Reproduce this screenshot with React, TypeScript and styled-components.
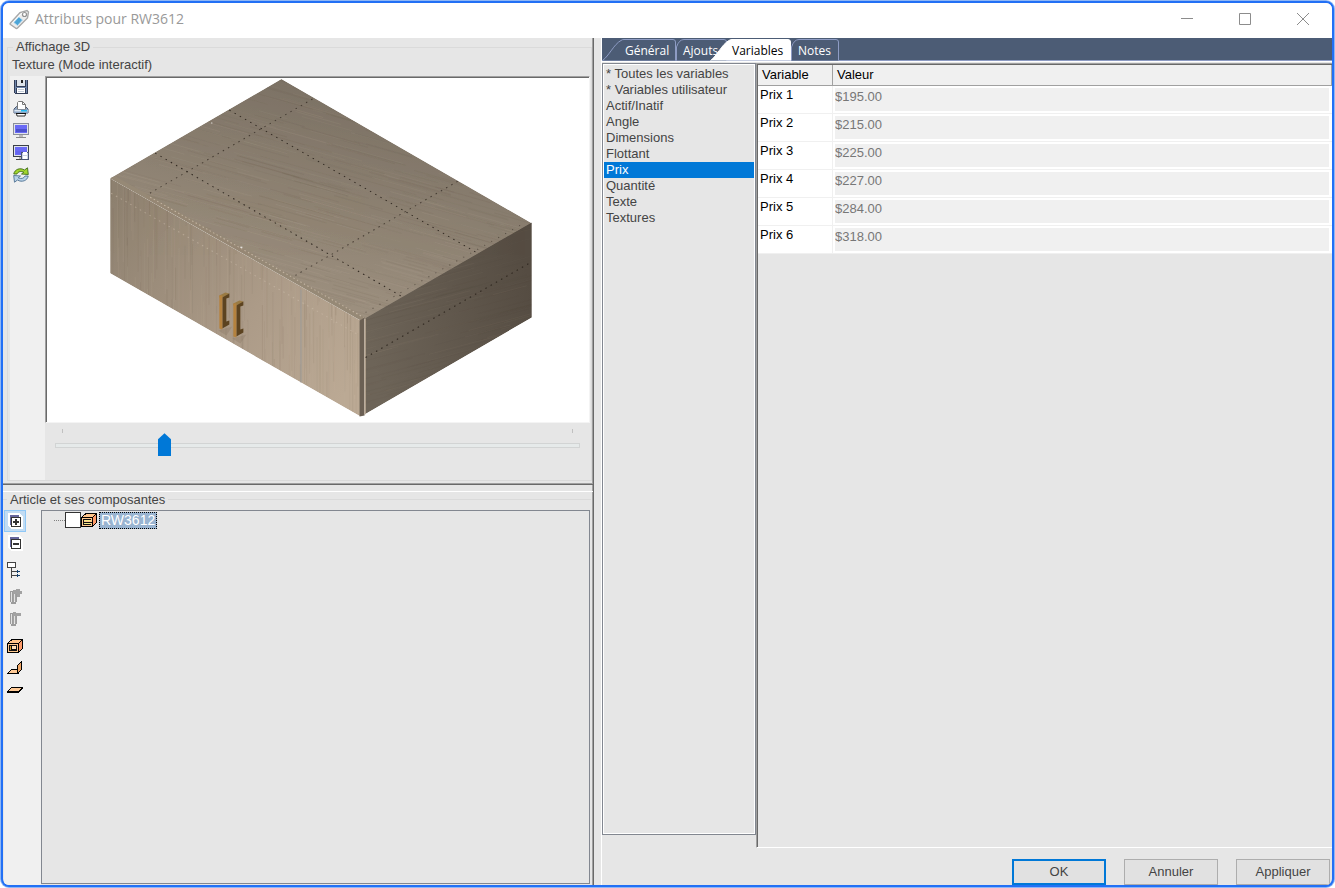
import React, { useState } from "react";
import styled, { createGlobalStyle } from "styled-components";

const GlobalStyle = createGlobalStyle`
  *, *::before, *::after { box-sizing: border-box; }
  body {
    margin: 0;
    background: #ffffff;
    font-family: "Liberation Sans", Arial, sans-serif;
    font-size: 13px;
    line-height: 16px;
    color: #444444;
  }
  button, input { font: inherit; color: inherit; }
`;

const Frame = styled.div`
  min-height: 100vh;
  padding: 1px;
  border-radius: 9px;
  background: #8fb6f5;
  display: flex;
`;

const DialogWindow = styled.div`
  flex: 1;
  min-width: 0;
  display: flex;
  flex-direction: column;
  overflow: hidden;
  border: 2px solid #2270f5;
  border-radius: 8px;
  background: #e6e6e6;
`;

const TitleBar = styled.header`
  display: flex;
  align-items: center;
  height: 35px;
  padding: 0 13px 3px 6px;
  background: #ffffff;
`;

const Title = styled.h1`
  flex: 1;
  margin: 0 0 0 5px;
  font-family: "Open Sans", "Noto Sans", sans-serif;
  font-size: 14px;
  font-weight: 400;
  line-height: 20px;
  color: #999999;
`;

const CaptionButtons = styled.div`
  display: flex;
  gap: 26px;
`;

const IconButton = styled.button<{ $size?: number; $active?: boolean }>`
  display: flex;
  align-items: center;
  justify-content: center;
  width: ${(p) => p.$size ?? 32}px;
  height: ${(p) => p.$size ?? 32}px;
  padding: 0;
  border: 1px solid ${(p) => (p.$active ? "#90c8f6" : "transparent")};
  background: ${(p) => (p.$active ? "#c2dcf3" : "transparent")};
`;

const Body = styled.div`
  flex: 1;
  display: grid;
  grid-template-columns: minmax(0, 591fr) 8px minmax(0, 730fr);
`;

const LeftColumn = styled.div`
  display: flex;
  flex-direction: column;
  border-right: 1px solid #696969;
  box-shadow: inset -1px 0 0 #a0a0a0;
`;

const Gutter = styled.div`
  border-right: 1px solid #ffffff;
`;

const PreviewPanel = styled.section`
  padding: 1px 1px 3px 4px;
  border-bottom: 1px solid #696969;
  box-shadow: inset 0 -1px 0 #a0a0a0;
`;

const TreePanel = styled.section`
  flex: 1;
  display: flex;
  flex-direction: column;
  margin-top: 6px;
  padding-right: 2px;
  border-top: 1px solid #ffffff;
`;

const GroupBox = styled.fieldset<{ $bare?: boolean }>`
  flex: 1;
  display: flex;
  flex-direction: column;
  min-width: 0;
  margin: 0;
  padding: ${(p) => (p.$bare ? "2px 1px 0 1px" : "2px 0 0 2px")};
  border: solid #dadada;
  border-width: ${(p) => (p.$bare ? "1px 0 0" : "1px")};
`;

const Legend = styled.legend`
  margin-left: 3px;
  padding: 0 3px;
  line-height: 16px;
`;

const Caption = styled.p`
  margin: 0 0 3px 2px;
`;

const Split = styled.div`
  flex: 1;
  display: flex;
`;

const Toolbar = styled.div<{ $width: number }>`
  flex: none;
  display: flex;
  flex-direction: column;
  width: ${(p) => p.$width}px;
  background: #f0f0f0;
`;

const ToolGap = styled.div`
  height: 5px;
`;

const ViewColumn = styled.div`
  flex: 1;
  min-width: 0;
  padding-right: 1px;
`;

const Viewer = styled.div`
  padding: 1px 0 0 1px;
  border: 1px solid;
  border-color: #a0a0a0 #f4f4f4 #f4f4f4 #a0a0a0;
  background: #ffffff;
  box-shadow: inset 1px 1px 0 #696969;
  svg { display: block; width: 100%; height: auto; }
`;

const SliderArea = styled.div`
  height: 57px;
  padding: 6px 10px 0;
`;

const Ticks = styled.div`
  display: flex;
  justify-content: space-between;
  height: 5px;
  padding: 0 7px;
  i { width: 1px; height: 4px; background: #c0c0c0; }
`;

const Slider = styled.input`
  appearance: none;
  display: block;
  width: 100%;
  height: 24px;
  margin: 0;
  background: transparent;
  &::-webkit-slider-runnable-track {
    height: 5px;
    border: 1px solid #d2d4d4;
    background: #e6eaea;
  }
  &::-webkit-slider-thumb {
    appearance: none;
    width: 13px;
    height: 23px;
    margin-top: -11px;
    background: #0078d7;
    clip-path: polygon(50% 0, 100% 6px, 100% 100%, 0 100%, 0 6px);
  }
`;

const Tree = styled.div`
  flex: 1;
  margin-bottom: 1px;
  border: 1px solid #828790;
`;

const TreeItem = styled.label`
  display: flex;
  align-items: center;
  height: 19px;
  padding-left: 12px;
  &::before {
    content: "";
    width: 11px;
    border-top: 1px dotted #808080;
  }
`;

const TreeCheck = styled.input`
  appearance: none;
  width: 16px;
  height: 16px;
  margin: 0;
  border: 1px solid #333333;
  background: #ffffff;
`;

const TreeLabel = styled.span`
  margin-left: 2px;
  padding: 0 1px;
  border: 1px dotted #000000;
  background: #99b4d1;
  color: #ffffff;
  font-size: 14px;
  line-height: 15px;
`;

const RightColumn = styled.div`
  display: flex;
  flex-direction: column;
`;

const TabBar = styled.div`
  display: flex;
  align-items: flex-end;
  height: 24px;
  border-bottom: 1px solid #ffffff;
  background: #4c5c75;
  box-shadow: inset 0 -1px 0 #8e9cc4;
`;

const Tab = styled.button<{ $width: number; $pad: number; $active?: boolean }>`
  position: relative;
  z-index: ${(p) => (p.$active ? 1 : 0)};
  width: ${(p) => p.$width}px;
  height: 22px;
  margin-left: ${(p) => (p.$active ? -17 : 0)}px;
  padding: 0 0 0 ${(p) => p.$pad}px;
  border: 0;
  background: none;
  color: ${(p) => (p.$active ? "#000000" : "#ffffff")};
  font-family: "Open Sans", "Noto Sans", sans-serif;
  font-size: 12px;
  line-height: 24px;
  text-align: left;
  svg { position: absolute; left: 0; top: 0; }
  span { position: relative; }
`;

const Panes = styled.div`
  flex: 1;
  display: flex;
  padding-top: 1px;
`;

const CategoryList = styled.ul`
  flex: none;
  width: 154px;
  margin: 0 0 13px;
  padding: 2px 1px 1px;
  list-style: none;
  border: 1px solid #828790;
  box-shadow: inset 0 0 0 1px #ffffff;
`;

const Category = styled.button<{ $selected: boolean }>`
  display: block;
  width: 100%;
  height: 16px;
  padding: 0 2px;
  border: 0;
  background: ${(p) => (p.$selected ? "#0078d7" : "transparent")};
  color: ${(p) => (p.$selected ? "#ffffff" : "#444444")};
  line-height: 16px;
  text-align: left;
`;

const GridPane = styled.div`
  flex: 1;
  padding: 1px 0 0 1px;
  border: solid;
  border-width: 1px 0 1px 1px;
  border-color: #a0a0a0 #ffffff #ffffff #a0a0a0;
  box-shadow: inset 1px 1px 0 #696969;
`;

const VariableTable = styled.table`
  width: 100%;
  border-collapse: separate;
  border-spacing: 0;
  table-layout: fixed;
  color: #000000;
  th {
    height: 21px;
    padding: 0 4px;
    border-bottom: 1px solid #a0a0a0;
    border-right: 1px solid #a0a0a0;
    background: #f0f0f0;
    font-weight: 400;
    text-align: left;
    line-height: 20px;
  }
  th:first-child { width: 75px; }
`;

const NameCell = styled.td`
  height: 28px;
  padding: 1px 2px;
  vertical-align: top;
  border-right: 1px solid #f0f0f0;
  border-bottom: 1px solid #f0f0f0;
  background: #ffffff;
`;

const ValueCell = styled.td`
  padding: 2px 3px 2px 2px;
  border-bottom: 1px solid #f0f0f0;
  background: #ffffff;
`;

const ValueInput = styled.input`
  display: block;
  width: 100%;
  height: 23px;
  padding: 0 0 6px;
  border: 0;
  background: #f0f0f0;
  color: #777777;
`;

const Footer = styled.footer`
  display: flex;
  justify-content: flex-end;
  padding: 11px 2px 0;
`;

const PushButton = styled.button<{ $primary?: boolean }>`
  width: 94px;
  height: 26px;
  margin-left: 18px;
  padding: 0;
  border: ${(p) => (p.$primary ? "2px solid #0078d7" : "1px solid #adadad")};
  background: #e1e1e1;
`;

/* Toolbar icons on a 16 px grid */
const Icon = ({ children, soft }: { children: React.ReactNode; soft?: boolean }) => (
  <svg width="16" height="16" viewBox="0 0 16 16" fill="none" shapeRendering={soft ? "auto" : "crispEdges"} aria-hidden>
    {children}
  </svg>
);

const TagIcon = () => (
  <svg width="21" height="21" viewBox="0 0 21 21" fill="none" aria-hidden>
    <path d="M1.500 14 11 3.500 18 1.500 19.500 3 18.500 9 8.500 19q-1 1-2 0l-5-3.500q-.8-.8 0-1.500z" fill="#ececec" stroke="#a8a8a8" strokeWidth="1.400" />
    <path d="M3.500 14 12 4.800l4-1.200" stroke="#fff" />
    <circle cx="15.500" cy="5.500" r="2" fill="#fff" stroke="#929292" strokeWidth="1.200" />
    <path d="m4.800 13.500 5-5.500 3.700 3-5 5.500z" fill="#4ca4d6" stroke="#b4d9f0" strokeWidth=".8" />
  </svg>
);

const SaveIcon = () => (
  <Icon>
    <path d="M1 1h14v14H2l-1-1z" fill="#6f86ab" />
    <path d="M4 1h8v6H4z" fill="#dfe5ec" />
    <path d="M8 1h2v3H8z" fill="#222" />
    <path d="M4 9h8v6H4z" fill="#fff" />
    <path d="M5 10h6v1H5zM5 12h6v1H5z" fill="#c3ccd8" />
    <path d="M1 1h1v13H1zM14 1h1v14h-1zM3 1h1v6H3zM12 1h1v6h-1zM3 7h10v1H3zM3 9h1v6H3zM12 9h1v6h-1zM2 14h13v1H2z" fill="#333e58" />
  </Icon>
);

const PrinterIcon = () => (
  <Icon soft>
    <path d="M1 8 3.500 5.500h9L15 8v4H1z" fill="#93a6bf" stroke="#4a5870" />
    <path d="M4.500 8.500V1.500l1-1h4l3 3v5z" fill="#fff" stroke="#777" />
    <path d="M9.500.5v3h3" stroke="#777" />
    <path d="M1 8.500h14V12H1z" fill="#8fa5c2" />
    <path d="M1.500 9h13v1.500h-13z" fill="#dce7f2" />
    <path d="M8 9h6v1.500H8z" fill="#21b9f2" />
    <path d="M3.500 12.500h9l-.5 2.500H4z" fill="#fff" stroke="#333" />
    <path d="M3 12.500h10" stroke="#111" />
  </Icon>
);

const MonitorIcon = ({ dark }: { dark?: boolean }) => (
  <>
    <path d="M.5.5h15v11H.5z" fill="#e1e3ea" stroke={dark ? "#3b4149" : "#8b8f99"} />
    <path d="M2 2h12v8H2z" fill="#6a6af5" />
    <path d="M3 6h11v3H3z" fill={dark ? "#6464ee" : "#4b50cd"} />
    <path d="M6 12h4v2H6z" fill="#bbb" />
    <path d="M3 14h10v1H3z" fill={dark ? "#444" : "#888"} />
  </>
);

const RefreshIcon = () => (
  <Icon soft>
    <path d="M.8 7C1.500 2.500 7 .2 11.500 3L14.500.8 15.300 7.500 8.500 7l2.300-1.800C8 3.800 5 4.500 4 7z" fill="#a2d62b" stroke="#3f6b1c" strokeWidth=".9" />
    <path d="M15.200 9c-.7 4.500-6.200 6.800-10.700 4L1.500 15.200.7 8.500l6.800.5-2.300 1.800c2.800 1.400 5.800.7 6.800-1.800z" fill="#b9d3ea" stroke="#4f7292" strokeWidth=".9" />
  </Icon>
);

const ExpandIcon = ({ plus }: { plus?: boolean }) => (
  <Icon>
    <path d="M1 0h11l4 4v12H4l-3-3z" fill="#fff" />
    <path d="M3 2h9v2H5v8H3z" fill="#66669c" />
    <path d="M4.500 4.500h9v9h-9z" fill="#fff" stroke="#333" />
    <path d="M6 8h6v2H6z" fill="#333" />
    {plus && <path d="M8 6h2v6H8z" fill="#333" />}
  </Icon>
);

const HierarchyIcon = () => (
  <Icon>
    <path d="M.5.5h8v5h-8z" fill="#fff" stroke="#444" />
    <path d="M4.500 6v10M5 9.500h7M5 13.500h7" stroke="#444" />
    <path d="M10 8h1v3h-1zM11 9h2v1h-2zM10 12h1v3h-1zM11 13h2v1h-2z" fill="#104070" />
  </Icon>
);

const BoltIcon = ({ plus }: { plus?: boolean }) => (
  <Icon>
    <path d="M3 2h3v11H3zM9 5h1v8H9zM4 13h5v2H4z" fill="#9c9c9c" />
    <path d="M4 3h1v10H4zM7 5h1v7H7z" fill="#e2e2e2" />
    <path d="M6 1h3v12H8V5H7v8H6z" fill="#a2a2a2" />
    <path d="M6 2h8v3H6z" fill="#a2a2a2" />
    {plus && <path d="M9 0h4v8H10V5H9zM13 2h2v3h-2z" fill="#a2a2a2" />}
  </Icon>
);

const CubeIcon = ({ shelves }: { shelves?: boolean }) => (
  <Icon>
    <path d="M.5 5.500 5.500 1.500h10l-4 4z" fill="#ffc48a" />
    <path d="M11.500 5.500l4-4v9l-4 4z" fill="#ff9b6a" />
    <path d="M.5 5.500h11v9H.5z" fill="#ffc98f" />
    <path d="M.5 5.500 5 1.500h10.500l-4 4v9H.5zM.5 5.500h11M15.500 1.500v9l-4 4" stroke="#000" />
    {shelves ? (
      <>
        <path d="M3 7h7v2H3zM3 11h7v2H3z" fill="#f4ec86" />
        <path d="M2.500 7v6M3 7.500h7M2 10.500h9M3 12.500h7" stroke="#111" />
      </>
    ) : (
      <>
        <path d="M3 7h6v6H3z" fill="#ffe0b8" />
        <path d="M2 7h2v6H2z" fill="#d99d28" />
        <path d="M2.500 7.500h7v5h-7zM4.500 8v3.500H9" stroke="#111" />
      </>
    )}
  </Icon>
);

const CornerIcon = () => (
  <Icon>
    <path d="M.5 13.500 4.500 9.500h7v4z" fill="#ffca96" stroke="#000" />
    <path d="M10.500 13.500V5.500l4-4v8z" fill="#f0a665" stroke="#000" />
  </Icon>
);

const PanelIcon = () => (
  <Icon>
    <path d="M.5 9.500 4.500 5.500h11l-4 4z" fill="#ffca96" stroke="#000" />
    <path d="M0 10.500h11.500l4-4" stroke="#000" />
  </Icon>
);

/* Repeatable noise so that the wood grain is the same on each render */
const noise = (n: number) => {
  const v = Math.sin(n * 127.1 + 11.7) * 43758.5453;
  return v - Math.floor(v);
};

const grain = (count: number, seed: number, dx: number, dy: number, strength: number) =>
  Array.from({ length: count }, (_, i) => {
    const len = 0.4 + noise(i * 7 + seed);
    const x = 60 + noise(i + seed) * 480 - dx / 2;
    const y = 75 + noise(i * 3 + seed + 5) * 345 - dy / 2;
    return (
      <line
        key={i}
        x1={x}
        y1={y}
        x2={x + dx * len}
        y2={y + dy * len}
        stroke={i % 2 ? "#4f3d2b" : "#e0d0bc"}
        strokeOpacity={strength * (0.4 + noise(i + 77))}
      />
    );
  });

const Handle = ({ x, y }: { x: number; y: number }) => (
  <g transform={`translate(${x} ${y})`}>
    <path d="M-1 38l8 5 6-9z" fill="#75614d" opacity=".2" />
    <path d="M0 3 6 0l4 1-3 4H0z" fill="#9a7b44" />
    <path d="M3 5l7-4v4l-3 1v23l3-1v4l-7 4z" fill="#5c4320" />
    <path d="M0 3h3v34l-3-1z" fill="#b5823e" />
  </g>
);

const Cabinet = () => (
  <svg viewBox="47 78 541 343" role="img" aria-label="RW3612">
    <defs>
      <linearGradient id="top" x1="300" y1="80" x2="250" y2="290" gradientUnits="userSpaceOnUse">
        <stop offset="0" stopColor="#7b7164" />
        <stop offset="1" stopColor="#9d907f" />
      </linearGradient>
      <linearGradient id="front" x1="110" y1="200" x2="360" y2="370" gradientUnits="userSpaceOnUse">
        <stop offset="0" stopColor="#8d806f" />
        <stop offset=".6" stopColor="#ac9b88" />
        <stop offset="1" stopColor="#bba994" />
      </linearGradient>
      <linearGradient id="side" x1="365" y1="330" x2="531" y2="290" gradientUnits="userSpaceOnUse">
        <stop offset="0" stopColor="#6d6458" />
        <stop offset="1" stopColor="#554c42" />
      </linearGradient>
      <clipPath id="topClip"><path d="M281 79 531 223 362 320 110 178z" /></clipPath>
      <clipPath id="frontClip"><path d="M110 178 360 320v96L110 273z" /></clipPath>
      <clipPath id="sideClip"><path d="M364 318 531 222v95L364 414z" /></clipPath>
    </defs>
    <g clipPath="url(#topClip)">
      <path d="M281 79 531 223 362 320 110 178z" fill="url(#top)" />
      {grain(900, 3, 60, 17, 0.055)}
    </g>
    <g clipPath="url(#frontClip)">
      <path d="M110 178 360 320v96L110 273z" fill="url(#front)" />
      {grain(900, 41, 0, 70, 0.06)}
    </g>
    <g clipPath="url(#sideClip)">
      <path d="M364 318 531 222v95L364 414z" fill="url(#side)" />
      {grain(700, 90, 60, -16, 0.035)}
    </g>
    <path d="M110 178 115 176 364 317 360 320z" fill="#968976" />
    <path d="M359 320 364 317v98l-5 1z" fill="#6b6054" />
    <path d="M364.500 318v96" stroke="#d8c4ac" />
    <path d="M300.500 289v93" stroke="#9c9b99" />
    <g stroke="#302820" strokeDasharray="1.500 4.500">
      <path d="M312 99 148 194M457 181 295 275" opacity=".75" />
      <path d="M229 110 477 253M155 153 401 296" />
      <path d="M365 357 530 262" />
      <path d="M365 312 523 223" opacity=".6" strokeDasharray="1 7" />
    </g>
    <g stroke="#d0c1af" strokeDasharray="1.500 2.500">
      <path d="M150 197 363 317" opacity=".8" />
      <path d="M111 193 359 335" opacity=".5" strokeDasharray="1.500 4" />
    </g>
    <path d="M240 247h2M211 123h1" stroke="#fff" />
    <Handle x={219} y={292} />
    <Handle x={233} y={300} />
  </svg>
);

const slanted = (w: number) => `M.5 21.500C7 17 12 5 19 1.500Q20 .5 22 .5H${w - 3}Q${w - 0.5} .5 ${w - 0.5} 3V21.500`;
const straight = (w: number) => `M.5 21.500V8Q3 .5 8 .5H${w - 3}Q${w - 0.5} .5 ${w - 0.5} 3V21.500`;

const tabs = [
  { name: "Général", width: 74, pad: 23, shape: slanted },
  { name: "Ajouts", width: 51, pad: 7, shape: straight },
  { name: "Variables", width: 81, pad: 22, shape: slanted },
  { name: "Notes", width: 48, pad: 7, shape: straight },
];

const categories = [
  "* Toutes les variables",
  "* Variables utilisateur",
  "Actif/Inatif",
  "Angle",
  "Dimensions",
  "Flottant",
  "Prix",
  "Quantité",
  "Texte",
  "Textures",
];

const prices = ["$195.00", "$215.00", "$225.00", "$227.00", "$284.00", "$318.00"];

export default function App() {
  const [tab, setTab] = useState("Variables");
  const [category, setCategory] = useState("Prix");
  const [zoom, setZoom] = useState(20);

  return (
    <Frame>
      <GlobalStyle />
      <DialogWindow role="dialog" aria-labelledby="dialog-title">
        <TitleBar>
          <TagIcon />
          <Title id="dialog-title">Attributs pour RW3612</Title>
          <CaptionButtons>
            <IconButton aria-label="Réduire">
              <svg width="12" height="12" stroke="#8c8c8c"><path d="M0 5.500h12" /></svg>
            </IconButton>
            <IconButton aria-label="Agrandir">
              <svg width="12" height="12" fill="none" stroke="#8c8c8c"><path d="M.5.5h11v11H.5z" /></svg>
            </IconButton>
            <IconButton aria-label="Fermer">
              <svg width="12" height="12" stroke="#8c8c8c"><path d="M0 0 12 12M12 0 0 12" /></svg>
            </IconButton>
          </CaptionButtons>
        </TitleBar>

        <Body>
          <LeftColumn>
            <PreviewPanel>
              <GroupBox>
                <Legend>Affichage 3D</Legend>
                <Caption>Texture (Mode interactif)</Caption>
                <Split>
                  <Toolbar $width={35}>
                    <IconButton $size={22} aria-label="Enregistrer"><SaveIcon /></IconButton>
                    <IconButton $size={22} aria-label="Imprimer"><PrinterIcon /></IconButton>
                    <IconButton $size={22} aria-label="Écran"><Icon><MonitorIcon /></Icon></IconButton>
                    <IconButton $size={22} aria-label="Enregistrer la vue">
                      <Icon>
                        <MonitorIcon dark />
                        <path d="M8.500 7.500h7v7h-7z" fill="#c9d2e4" stroke="#4a5674" />
                        <path d="M10 7h4v3h-4zM10 11h4v3h-4z" fill="#fff" />
                      </Icon>
                    </IconButton>
                    <IconButton $size={22} aria-label="Actualiser"><RefreshIcon /></IconButton>
                  </Toolbar>
                  <ViewColumn>
                    <Viewer><Cabinet /></Viewer>
                    <SliderArea>
                      <Ticks><i /><i /></Ticks>
                      <Slider
                        type="range"
                        aria-label="Zoom"
                        value={zoom}
                        onChange={(e) => setZoom(Number(e.target.value))}
                      />
                    </SliderArea>
                  </ViewColumn>
                </Split>
              </GroupBox>
            </PreviewPanel>

            <TreePanel>
              <GroupBox $bare>
                <Legend>Article et ses composantes</Legend>
                <Split>
                  <Toolbar $width={37}>
                    <IconButton $size={22} $active aria-label="Tout développer"><ExpandIcon plus /></IconButton>
                    <IconButton $size={22} aria-label="Tout réduire"><ExpandIcon /></IconButton>
                    <ToolGap />
                    <IconButton $size={22} aria-label="Hiérarchie"><HierarchyIcon /></IconButton>
                    <ToolGap />
                    <IconButton $size={22} disabled aria-label="Ajouter"><BoltIcon plus /></IconButton>
                    <IconButton $size={22} disabled aria-label="Retirer"><BoltIcon /></IconButton>
                    <ToolGap />
                    <IconButton $size={22} aria-label="Caisson"><CubeIcon /></IconButton>
                    <IconButton $size={22} aria-label="Coin"><CornerIcon /></IconButton>
                    <IconButton $size={22} aria-label="Panneau"><PanelIcon /></IconButton>
                  </Toolbar>
                  <Tree>
                    <TreeItem>
                      <TreeCheck type="checkbox" />
                      <CubeIcon shelves />
                      <TreeLabel>RW3612</TreeLabel>
                    </TreeItem>
                  </Tree>
                </Split>
              </GroupBox>
            </TreePanel>
          </LeftColumn>

          <Gutter />

          <RightColumn>
            <TabBar role="tablist">
              {tabs.map((t) => {
                const active = t.name === tab;
                return (
                  <Tab
                    key={t.name}
                    role="tab"
                    aria-selected={active}
                    $width={t.width}
                    $pad={t.pad}
                    $active={active}
                    onClick={() => setTab(t.name)}
                  >
                    <svg width={t.width} height="22" fill={active ? "#ffffff" : "#4c5c75"} stroke={active ? "#ffffff" : "#8e9cc4"} aria-hidden>
                      <path d={t.shape(t.width)} />
                    </svg>
                    <span>{t.name}</span>
                  </Tab>
                );
              })}
            </TabBar>
            <Panes>
              <CategoryList>
                {categories.map((c) => (
                  <li key={c}>
                    <Category $selected={c === category} aria-pressed={c === category} onClick={() => setCategory(c)}>
                      {c}
                    </Category>
                  </li>
                ))}
              </CategoryList>
              <GridPane>
                <VariableTable>
                  <thead>
                    <tr>
                      <th scope="col">Variable</th>
                      <th scope="col">Valeur</th>
                    </tr>
                  </thead>
                  <tbody>
                    {prices.map((price, i) => (
                      <tr key={price}>
                        <NameCell>
                          <label htmlFor={`prix-${i}`}>Prix {i + 1}</label>
                        </NameCell>
                        <ValueCell>
                          <ValueInput id={`prix-${i}`} defaultValue={price} disabled />
                        </ValueCell>
                      </tr>
                    ))}
                  </tbody>
                </VariableTable>
              </GridPane>
            </Panes>
            <Footer>
              <PushButton $primary>OK</PushButton>
              <PushButton>Annuler</PushButton>
              <PushButton>Appliquer</PushButton>
            </Footer>
          </RightColumn>
        </Body>
      </DialogWindow>
    </Frame>
  );
}
